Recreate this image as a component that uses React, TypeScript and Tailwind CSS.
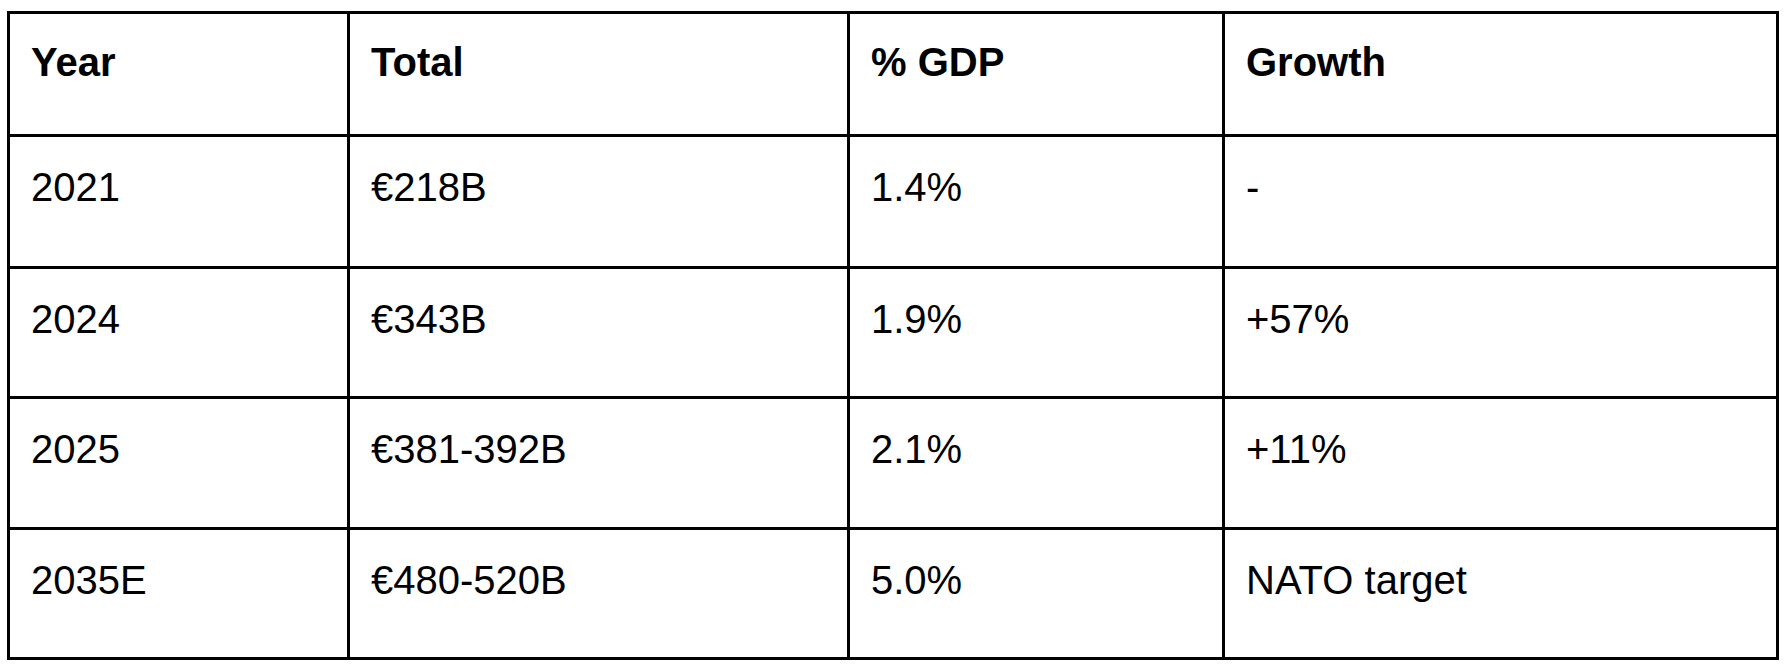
const header = ['Year', 'Total', '% GDP', 'Growth']

const rows = [
  { h: 'h-[129px]', cells: ['2021', '€218B', '1.4%', '-'] },
  { h: 'h-[127px]', cells: ['2024', '€343B', '1.9%', '+57%'] },
  { h: 'h-[128px]', cells: ['2025', '€381-392B', '2.1%', '+11%'] },
  { h: 'h-[127px]', cells: ['2035E', '€480-520B', '5.0%', 'NATO target'] },
]

export default function App() {
  return (
    <div className="min-h-screen bg-white pt-[11px] pl-[7px] font-['Liberation_Sans',Arial,sans-serif] text-black">
      <div className="grid w-[1772px] grid-cols-[337px_497px_372px_551px] gap-[3px] bg-black p-[3px]">
        {header.map((label) => (
          <div key={label} className="h-[120px] bg-white pl-[21px] pt-[25px] text-[40px] font-bold leading-[46px]">
            {label}
          </div>
        ))}
        {rows.map((row) =>
          row.cells.map((cell, i) => (
            <div key={row.cells[0] + i} className={`${row.h} bg-white pl-[21px] pt-[27px] text-[40px] leading-[46px]`}>
              {cell}
            </div>
          )),
        )}
      </div>
    </div>
  )
}
